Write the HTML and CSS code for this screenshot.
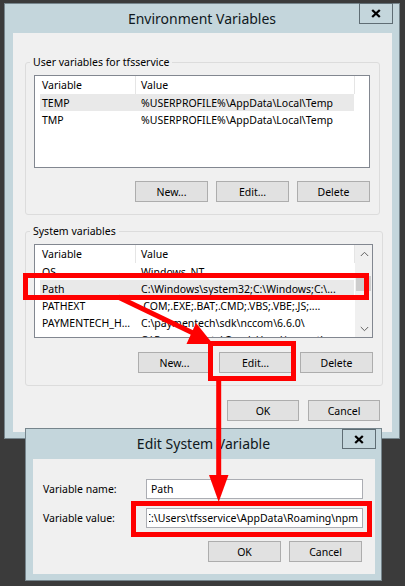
FILE: index.html
```html
<!DOCTYPE html>
<html lang="en">
<head>
<meta charset="utf-8">
<title>Environment Variables</title>
<link rel="stylesheet" href="styles.css">
</head>
<body>
<div class="desktop">
  <section class="window env-window">
    <header class="titlebar">
      <h1 class="title">Environment Variables</h1>
      <button class="close" aria-label="Close"><svg width="10" height="9" viewBox="0 0 10 9"><path d="M1.2 1 L8.8 8 M8.8 1 L1.2 8" stroke="#000" stroke-width="2.3" fill="none"/></svg></button>
    </header>
    <div class="client env-client">
      <fieldset class="group">
        <legend>User variables for tfsservice</legend>
        <div class="listview user-list">
          <div class="lv-header">
            <span class="hcell c1">Variable</span><span class="hcell c2">Value</span><span class="hfill"></span>
          </div>
          <div class="lv-row selected"><span class="cell c1">TEMP</span><span class="cell c2">%USERPROFILE%\AppData\Local\Temp</span></div>
          <div class="lv-row"><span class="cell c1">TMP</span><span class="cell c2">%USERPROFILE%\AppData\Local\Temp</span></div>
        </div>
        <div class="btn-row">
          <button class="btn">New...</button><button class="btn">Edit...</button><button class="btn">Delete</button>
        </div>
      </fieldset>
      <fieldset class="group system-group">
        <legend>System variables</legend>
        <div class="listview sys-list">
          <div class="lv-body">
            <div class="lv-header">
              <span class="hcell c1">Variable</span><span class="hcell c2">Value</span><span class="hfill"></span>
            </div>
            <div class="lv-row"><span class="cell c1">OS</span><span class="cell c2">Windows_NT</span></div>
            <div class="lv-row selected"><span class="cell c1">Path</span><span class="cell c2">C:\Windows\system32;C:\Windows;C:\...</span></div>
            <div class="lv-row"><span class="cell c1">PATHEXT</span><span class="cell c2">.COM;.EXE;.BAT;.CMD;.VBS;.VBE;.JS;....</span></div>
            <div class="lv-row"><span class="cell c1">PAYMENTECH_H...</span><span class="cell c2">C:\paymentech\sdk\nccom\6.6.0\</span></div>
            <div class="lv-row"><span class="cell c1"></span><span class="cell c2">C:\ProgramData\Oracle\Java\javapath</span></div>
          </div>
          <div class="scrollbar">
            <span class="sb-btn"><svg width="9" height="6" viewBox="0 0 9 6"><polyline points="0.8,5 4.5,1.3 8.2,5" fill="none" stroke="#606060" stroke-width="1"/></svg></span>
            <span class="sb-track"><span class="sb-thumb"></span></span>
            <span class="sb-btn"><svg width="9" height="6" viewBox="0 0 9 6"><polyline points="0.8,1 4.5,4.7 8.2,1" fill="none" stroke="#606060" stroke-width="1"/></svg></span>
          </div>
        </div>
        <div class="btn-row sys-btns">
          <button class="btn">New...</button><button class="btn">Edit...</button><button class="btn">Delete</button>
        </div>
      </fieldset>
      <div class="btn-row dlg-btns">
        <button class="btn btn-sm">OK</button><button class="btn btn-sm">Cancel</button>
      </div>
    </div>
  </section>

  <section class="window edit-window">
    <header class="titlebar edit-titlebar">
      <h2 class="title">Edit System Variable</h2>
      <button class="close" aria-label="Close"><svg width="10" height="9" viewBox="0 0 10 9"><path d="M1.2 1 L8.8 8 M8.8 1 L1.2 8" stroke="#000" stroke-width="2.3" fill="none"/></svg></button>
    </header>
    <div class="client edit-client">
      <div class="form">
        <label class="lbl">Variable name:</label>
        <div class="field"><span class="field-text">Path</span></div>
        <label class="lbl">Variable value:</label>
        <div class="field value-field"><span class="field-text end"><span>;C:\Users\tfsservice\AppData\Roaming\npm</span></span></div>
      </div>
      <div class="btn-row edit-btns">
        <button class="btn">OK</button><button class="btn">Cancel</button>
      </div>
    </div>
  </section>

  <svg class="annotations" width="405" height="586" viewBox="0 0 405 586">
    <rect x="25.5" y="275.5" width="341" height="22" fill="none" stroke="#ff0000" stroke-width="5"/>
    <rect x="210.5" y="343.5" width="83" height="35" fill="none" stroke="#ff0000" stroke-width="5"/>
    <rect x="133.5" y="503.5" width="236" height="31" fill="none" stroke="#ff0000" stroke-width="5"/>
    <line x1="118" y1="297" x2="193" y2="333" stroke="#ff0000" stroke-width="5"/>
    <polygon points="213,344 186.5,344 196,323" fill="#ff0000"/>
    <line x1="218.7" y1="379" x2="218.7" y2="478" stroke="#ff0000" stroke-width="5"/>
    <polygon points="209,475 228.5,475 218.7,502" fill="#ff0000"/>
  </svg>
</div>
</body>
</html>
```
FILE: styles.css
```css
* { box-sizing: border-box; }
html, body { margin: 0; padding: 0; }
body {
  width: 405px;
  height: 586px;
  overflow: hidden;
  background: #3b3b3b;
  font-family: "Noto Sans", "Open Sans", sans-serif;
  font-size: 10.5px;
  color: #000;
}
.desktop { position: relative; width: 405px; height: 586px; }

/* windows */
.window {
  position: absolute;
  background: #c4d6dc;
  border: 1px solid #76858c;
  display: flex;
  flex-direction: column;
}
.env-window { left: 4px; top: 3px; width: 396px; height: 436px; }
.edit-window { left: 25px; top: 428px; width: 357px; height: 153px; }

.titlebar {
  position: relative;
  height: 29px;
  display: flex;
  align-items: center;
  justify-content: center;
  flex: none;
}
.edit-titlebar { height: 30px; }
.title {
  margin: 0;
  font-size: 14px;
  font-weight: normal;
  color: #101820;
  line-height: 20px;
}
.close {
  position: absolute;
  top: -1px;
  right: 6px;
  width: 34px;
  height: 21px;
  padding: 0;
  background: #c4d6dc;
  border: 1px solid #5f6d74;
  display: flex;
  align-items: center;
  justify-content: center;
}
.edit-titlebar .close { top: 0; right: 5px; height: 20px; }

.client { background: #f0f0f0; }
.env-client {
  margin: 0 7px 6px 8px;
  height: 399px;
  padding: 21px 12px 0 12px;
}
.edit-client {
  margin: 0 6px 6px 7px;
  height: 115px;
  padding: 20px 13px 0 10px;
}

/* group boxes */
.group {
  margin: 0;
  padding: 5px 9px 12px 8px;
  border: 1px solid #dcdcdc;
  border-radius: 3px;
}
.group legend {
  margin-left: -4px;
  padding: 0 3px;
  line-height: 16px;
}
.system-group { margin-top: 8px; }

/* list views */
.listview {
  background: #fff;
  border: 1px solid #828790;
  overflow: hidden;
}
.user-list { height: 93px; }
.sys-list { height: 94px; display: flex; }
.lv-body { flex: 1; min-width: 0; overflow: hidden; }

.lv-header {
  display: flex;
  height: 18px;
  line-height: 18px;
  white-space: nowrap;
}
.hcell {
  flex: none;
  border-right: 1px solid #e5e5e5;
  overflow: hidden;
}
.hcell.c1 { width: 101px; padding-left: 7px; }
.hcell.c2 { width: 219px; padding-left: 5px; }
.hfill { flex: 1; }

.lv-row {
  display: flex;
  height: 17px;
  line-height: 18px;
  margin-left: 5px;
  width: 314px;
  white-space: nowrap;
}
.lv-row.selected { background: #e9e9e9; }
.cell { flex: none; overflow: hidden; }
.cell.c1 { width: 96px; padding-left: 2px; }
.cell.c2 { width: 218px; padding-left: 5px; }

/* scrollbar */
.scrollbar {
  flex: none;
  width: 17px;
  background: #f0f0f0;
  display: flex;
  flex-direction: column;
  border-left: 1px solid #f0f0f0;
}
.sb-btn {
  height: 17px;
  display: flex;
  align-items: center;
  justify-content: center;
  flex: none;
}
.sb-track { flex: 1; position: relative; }
.sb-thumb {
  position: absolute;
  left: 0;
  right: 1px;
  top: 14px;
  height: 15px;
  background: #cdcdcd;
}

/* buttons */
.btn-row {
  display: flex;
  justify-content: flex-end;
  gap: 8px;
  margin-top: 13px;
}
.sys-btns { margin-top: 14px; }
.dlg-btns { margin-top: 14px; gap: 9px; }
.btn {
  width: 73px;
  height: 21px;
  padding: 0;
  background: #e1e1e1;
  border: 1px solid #adadad;
  font-family: inherit;
  font-size: 10.5px;
  color: #000;
  line-height: 18px;
}
.btn-sm { width: 72px; }

/* edit form */
.form {
  display: grid;
  grid-template-columns: 103px 217px;
  row-gap: 9px;
  align-items: center;
}
.lbl { line-height: 16px; }
.field {
  height: 20px;
  background: #fff;
  border: 1px solid #abadb3;
  padding: 0 5px 0 4px;
  display: flex;
  align-items: center;
  line-height: 16px;
}
.value-field { padding: 0 4px 0 2px; }
.field-text {
  flex: 1;
  min-width: 0;
  overflow: hidden;
  white-space: nowrap;
  display: flex;
}
.field-text.end { justify-content: flex-end; }
.edit-btns { margin-top: 13px; margin-right: 0; }

/* annotations */
.annotations {
  position: absolute;
  left: 0;
  top: 0;
  pointer-events: none;
}
```
